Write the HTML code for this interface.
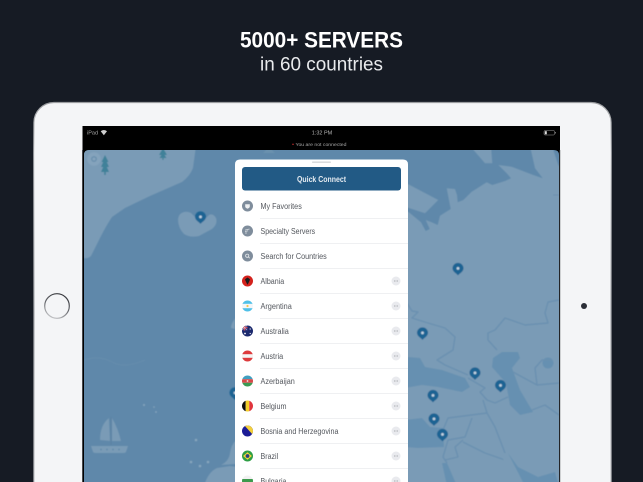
<!DOCTYPE html>
<html><head><meta charset="utf-8"><style>
html,body{margin:0;padding:0;background:#161b24;width:643px;height:482px;overflow:hidden}
svg{display:block}
text{font-family:"Liberation Sans",sans-serif}
.r{font-size:7.8px;fill:#54585e}
</style></head><body>
<svg width="643" height="482" viewBox="0 0 643 482" xmlns="http://www.w3.org/2000/svg">
<defs>
<linearGradient id="edge" x1="0" y1="0" x2="0" y2="1"><stop offset="0" stop-color="#9a9c9f"/><stop offset=".12" stop-color="#e0e1e3"/><stop offset=".5" stop-color="#a8aaae"/><stop offset="1" stop-color="#c8c9cc"/></linearGradient>
<linearGradient id="hb" x1="0.7" y1="0" x2="0.3" y2="1"><stop offset="0" stop-color="#33353a"/><stop offset=".5" stop-color="#66686d"/><stop offset="1" stop-color="#c4c5c8"/></linearGradient>
<clipPath id="map"><path d="M89 150H554Q559 150 559 155V482H84V155Q84 150 89 150Z"/></clipPath>
<clipPath id="c"><circle cx="0" cy="0" r="5.5"/></clipPath>
<filter id="b" x="-5%" y="-5%" width="110%" height="110%"><feGaussianBlur stdDeviation="0.45"/></filter>
<filter id="t" x="-5%" y="-5%" width="110%" height="110%"><feGaussianBlur stdDeviation="0.22"/></filter>
<g id="pin"><path d="M0 6.4C-1.2 4.7-5.5 2.7-5.5-.6A5.5 5.5 0 0 1 5.500-.6C5.500 2.700 1.200 4.700 0 6.400Z" fill="#1f6393"/><circle cx="0" cy="-.6" r="1.400" fill="#c5d5e2"/></g>
<g id="more"><circle cx="0" cy="0" r="4.500" fill="#e9eaee"/><path d="M-2 0H2" stroke="#8d9196" stroke-width=".8" stroke-dasharray=".9 .65"/></g>
</defs>

<rect width="643" height="482" fill="#161b24"/>
<g filter="url(#t)">
<text x="321.500" y="47.500" text-anchor="middle" font-size="22" font-weight="700" fill="#fff" textLength="163" lengthAdjust="spacingAndGlyphs">5000+ SERVERS</text>
<text x="321.500" y="70.500" text-anchor="middle" font-size="19.500" fill="#e8eaec" textLength="123" lengthAdjust="spacingAndGlyphs">in 60 countries</text>
</g>

<!-- iPad -->
<rect x="34" y="102.500" width="577" height="420" rx="20" fill="#f4f5f7" stroke="url(#edge)" stroke-width="1.200"/>
<circle cx="57" cy="306" r="12.300" fill="#f4f5f7" stroke="url(#hb)" stroke-width="1.200"/>
<circle cx="584" cy="306" r="3" fill="#2b2e37"/>
<rect x="82.500" y="126" width="477.500" height="360" fill="#000"/>

<g filter="url(#t)">
<text x="87" y="134.500" font-size="5.500" fill="#a5a5a5">iPad</text>
<path d="M100.700 131.300A4.500 4.500 0 0 1 107 131.300L103.850 135.200Z" fill="#cfcfcf"/>
<text x="322" y="134.700" text-anchor="middle" font-size="5.500" fill="#b5b5b5">1:32 PM</text>
<rect x="544" y="130.500" width="10.500" height="4.500" rx="1" fill="none" stroke="#9a9a9a" stroke-width=".5"/>
<rect x="544.800" y="131.200" width="2" height="3.100" fill="#ddd"/>
<rect x="555" y="132" width=".8" height="1.500" fill="#888"/>
<circle cx="293" cy="144.300" r=".7" fill="#d33"/>
<text x="295.500" y="146" font-size="4.800" fill="#a8a8a8" textLength="51" lengthAdjust="spacingAndGlyphs">You are not connected</text>
</g>

<!-- Map -->
<g clip-path="url(#map)">
<rect x="84" y="150" width="475" height="332" fill="#5f88aa"/>
<g filter="url(#b)">
<g fill="#7a9bb6">
<path d="M80 146H196L193 168Q190 176 182 182L150 196L125 208L112 217Q106 226 100 238L91 256Q87 260 80 257Z"/>
<path d="M178 219Q179 213 184 212Q190 211 193 215L196 218H206L209 215Q213 213 216 218Q218 224 212 229L199 236Q190 238 184 234Q178 228 178 219Z"/>
<path d="M470 146H491L492.300 163.300H485Z"/>
<path d="M405 212L408.300 211.700L421 222.300L425.700 231L429.700 229L425.700 220L431.700 222.300L437.700 225L440 215.700L450.700 209L446.700 188.300L455 189L457 195L457.700 202.300L463.300 200L471.700 191.700L486.700 182.300L492.300 185L505 181L511 178.300L506.700 173.300L498.300 165L511.700 166.700L533.300 175L542.700 178.300L535 168.300L530 146H552L558.300 165L562 170V486H405Z"/>
<path d="M405 184L408.300 184.300L438.300 200L425 213.300L405 206.700Z"/>
<path d="M234 320Q231 324 231 328L235 329V318Z"/>
<path d="M204 486Q208 472 217 468L230 466L238 467V486Z"/>
<path d="M221 465Q229 461 230 453Q231 445 236 440V464Z"/>
</g>
<g fill="#6690b1">
<path d="M408 357L420 358L425 367L442 370L465 378L470 387L462 392L438 387L422 385L405 388Z"/>
<path d="M502 352H518L520 358L512 368L520 390L533 412L520 415L510 405L506 383L492 367L493 358Z"/>
<path d="M405 420L422 418L430 427L443 428L444 447L418 448L405 447Z"/>
<path d="M442 463H447L457 486H447Z"/>
<path d="M508 453L518 467L538 477L555 472L559 486H525Z"/>
<circle cx="548" cy="363" r="5.500"/>
</g>
<g fill="none" stroke="#6a90b0" stroke-width="1.400" stroke-linejoin="round">
<path d="M405 300L412 311L418 312L412 318L428 323L445 328L455 337L453 350L437 360L445 365L468 375"/>
<path d="M559 300L548 302L545 313L548 323L525 325L505 318L495 330L488 333L488 340L497 350"/>
<path d="M513 372L537 385L559 383M537 385L535 368L542 360L552 360"/>
<path d="M532 410L545 405L559 415"/>
<path d="M468 378L485 388L480 392L487 400L495 403L508 397M483 400L487 413L495 427L505 453"/>
<path d="M487 413L448 418L443 430M472 418L465 437L448 440L443 457L447 463"/>
<path d="M463 440L455 447L458 457L445 460"/>
<path d="M463 442L485 453L505 460"/>
<path d="M553 195H559" stroke-width="1"/>
</g>
<ellipse cx="506" cy="458" rx="3" ry="3.500" fill="#7a9bb6"/>
<path d="M84 360Q100 355 112 362T145 360" fill="none" stroke="#6a90ae" stroke-width=".6"/>
<circle cx="94" cy="159" r="6.800" fill="#84a3bc"/>
<circle cx="94" cy="159" r="2.300" fill="none" stroke="#618aa8" stroke-width="1"/>
<g fill="#3f8199">
<path d="M105 155L108.500 162H106.800L109 167H106.800L109 172H105.800V175H104.200V172H101L103.200 167H101L103.200 162H101.500Z"/>
<path d="M163 148L167 155H164.500L166.500 158H163.600V160H162.400V158H159.500L161.500 155H159Z"/>
</g>
<g fill="#7a9bb6">
<path d="M100 440Q100 425 109 418L110 441Z"/>
<path d="M112 418Q118 428 121 441H112Z"/>
<path d="M91 446H128L126 452Q125 453 124 453H95Q94 453 93 452Z"/>
</g>
<path d="M111 417V445" stroke="#5a7f9e" stroke-width=".7"/>
<g fill="#5f88aa"><circle cx="101" cy="449.500" r=".9"/><circle cx="107" cy="449.500" r=".9"/><circle cx="113" cy="449.500" r=".9"/><circle cx="119" cy="449.500" r=".9"/></g>
<g fill="#88a6bd"><circle cx="196" cy="440" r="1.300"/><circle cx="191" cy="462" r="1.300"/><circle cx="200" cy="466" r="1.300"/><circle cx="208" cy="462" r="1.300"/><circle cx="144" cy="405" r="1"/><circle cx="154" cy="407" r=".8"/><circle cx="156" cy="412" r=".9"/></g>
<path d="M263 153H275L271 149H267Z" fill="#6b91ae"/>
<use href="#pin" x="200.500" y="217.500"/>
<use href="#pin" x="458" y="269"/>
<use href="#pin" x="422.500" y="333.500"/>
<use href="#pin" x="475" y="373.500"/>
<use href="#pin" x="500.500" y="386"/>
<use href="#pin" x="433" y="396"/>
<use href="#pin" x="434" y="419.500"/>
<use href="#pin" x="442.500" y="435"/>
<use href="#pin" x="235" y="393.500"/>
</g>
</g>
<path d="M82.500 150V482M559.800 150V482" stroke="#3a3c40" stroke-width=".8"/>

<!-- Panel -->
<path d="M240 159.500H403Q408 159.500 408 164.500V482H235V164.500Q235 159.500 240 159.500Z" fill="#fff"/>
<g filter="url(#t)">
<rect x="312" y="161.500" width="19" height="1.400" rx=".7" fill="#d5d7da"/>
<rect x="242" y="167" width="159" height="23.500" rx="3" fill="#245a85"/>
<text x="321.500" y="181.800" text-anchor="middle" font-size="8" font-weight="700" fill="#e4ebf1" textLength="49" lengthAdjust="spacingAndGlyphs">Quick Connect</text>

<path d="M260 218.500H408M260 243.500H408M260 268.500H408M260 293.500H408M260 318.500H408M260 343.500H408M260 368.500H408M260 393.500H408M260 418.500H408M260 443.500H408M260 468.500H408" stroke="#eff0f2" stroke-width="1"/>

<text class="r" x="260.500" y="209" textLength="41.300" lengthAdjust="spacingAndGlyphs">My Favorites</text>
<text class="r" x="260.500" y="234" textLength="54.700" lengthAdjust="spacingAndGlyphs">Specialty Servers</text>
<text class="r" x="260.500" y="259" textLength="66.300" lengthAdjust="spacingAndGlyphs">Search for Countries</text>
<text class="r" x="260.500" y="284" textLength="23.700" lengthAdjust="spacingAndGlyphs">Albania</text>
<text class="r" x="260.500" y="309" textLength="31.300" lengthAdjust="spacingAndGlyphs">Argentina</text>
<text class="r" x="260.500" y="334" textLength="28.300" lengthAdjust="spacingAndGlyphs">Australia</text>
<text class="r" x="260.500" y="359" textLength="22.700" lengthAdjust="spacingAndGlyphs">Austria</text>
<text class="r" x="260.500" y="384" textLength="34.300" lengthAdjust="spacingAndGlyphs">Azerbaijan</text>
<text class="r" x="260.500" y="409" textLength="26" lengthAdjust="spacingAndGlyphs">Belgium</text>
<text class="r" x="260.500" y="434" textLength="78" lengthAdjust="spacingAndGlyphs">Bosnia and Herzegovina</text>
<text class="r" x="260.500" y="459" textLength="17.700" lengthAdjust="spacingAndGlyphs">Brazil</text>
<text class="r" x="260.500" y="484" textLength="26" lengthAdjust="spacingAndGlyphs">Bulgaria</text>

<g transform="translate(247.500,206)"><circle r="5.500" fill="#7f8d9c"/><path d="M-2.300-1.800H2.300V.5Q2.300 1.800 0 2.800Q-2.300 1.800-2.300.5Z" fill="#eef0f2"/></g>
<g transform="translate(247.500,231)"><circle r="5.500" fill="#7f8d9c"/><path d="M-2.500-.9L2-2M-2.500.6L.6-.2M-2.500 2H-.6" stroke="#d8dde2" stroke-width=".8"/></g>
<g transform="translate(247.500,256)"><circle r="5.500" fill="#7f8d9c"/><circle cx="-.3" cy="-.3" r="1.600" fill="none" stroke="#e6e9ec" stroke-width=".8"/><path d="M.9.9L2.200 2.200" stroke="#e6e9ec" stroke-width=".8"/></g>

<g transform="translate(247.500,281)" clip-path="url(#c)"><rect x="-6" y="-6" width="12" height="12" fill="#d3201f"/><path d="M0-3.500L2.500-1.800L2-.2L1 2L0 3.800L-1 2L-2-.2L-2.500-1.800Z" fill="#1a1a1a"/></g>
<g transform="translate(247.500,306)" clip-path="url(#c)"><rect x="-6" y="-6" width="12" height="12" fill="#f4f6f8"/><rect x="-6" y="-6" width="12" height="3.800" fill="#4fc0e8"/><rect x="-6" y="2.200" width="12" height="3.800" fill="#4fc0e8"/><circle r="1.100" fill="#f2c84a"/></g>
<g transform="translate(247.500,331)" clip-path="url(#c)"><rect x="-6" y="-6" width="12" height="12" fill="#1e2a6e"/><rect x="-6" y="-6" width="6" height="5.500" fill="#3b3f85"/><path d="M-6-3.300H0M-3-6V-.5" stroke="#e24c55" stroke-width="1.200"/><path d="M-5.500-5.500L-.5-1M-.5-5.500L-5.500-1" stroke="#e8e8f0" stroke-width=".5"/><circle cx="2.700" cy="-2" r=".6" fill="#fff"/><circle cx="2.700" cy="2.500" r=".6" fill="#fff"/><circle cx="-2.500" cy="2.500" r=".9" fill="#fff"/></g>
<g transform="translate(247.500,356)" clip-path="url(#c)"><rect x="-6" y="-6" width="12" height="12" fill="#f4f4f4"/><rect x="-6" y="-6" width="12" height="4.200" fill="#dd3b3d"/><rect x="-6" y="1.800" width="12" height="4.200" fill="#dd3b3d"/></g>
<g transform="translate(247.500,381)" clip-path="url(#c)"><rect x="-6" y="-6" width="12" height="4.200" fill="#3f9fc0"/><rect x="-6" y="-1.800" width="12" height="3.600" fill="#d74a4a"/><rect x="-6" y="1.800" width="12" height="4.200" fill="#3b9a52"/><circle r=".9" fill="#eee"/></g>
<g transform="translate(247.500,406)" clip-path="url(#c)"><rect x="-6" y="-6" width="4.200" height="12" fill="#111"/><rect x="-1.800" y="-6" width="3.600" height="12" fill="#f4cf2c"/><rect x="1.800" y="-6" width="4.200" height="12" fill="#e0363c"/></g>
<g transform="translate(247.500,431)" clip-path="url(#c)"><rect x="-6" y="-6" width="12" height="12" fill="#1b1f96"/><path d="M-3.500-6H6V4.500Z" fill="#f3cf3a"/></g>
<g transform="translate(247.500,456)" clip-path="url(#c)"><rect x="-6" y="-6" width="12" height="12" fill="#2f9e44"/><path d="M0-3.800L4.400 0L0 3.800L-4.400 0Z" fill="#f2d43a"/><circle r="1.900" fill="#27407f"/></g>
<g transform="translate(247.500,481)" clip-path="url(#c)"><rect x="-6" y="-6" width="12" height="4" fill="#f2f2f2"/><rect x="-6" y="-2" width="12" height="4" fill="#3d9a4e"/><rect x="-6" y="2" width="12" height="4" fill="#d94040"/></g>

<use href="#more" x="396" y="281"/>
<use href="#more" x="396" y="306"/>
<use href="#more" x="396" y="331"/>
<use href="#more" x="396" y="356"/>
<use href="#more" x="396" y="381"/>
<use href="#more" x="396" y="406"/>
<use href="#more" x="396" y="431"/>
<use href="#more" x="396" y="456"/>
<use href="#more" x="396" y="481"/>
</g>
</svg>
</body></html>
